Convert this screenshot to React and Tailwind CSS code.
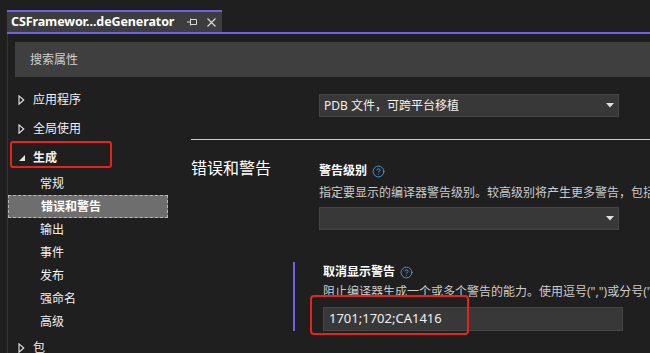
import React from 'react'
import { CircleHelp } from 'lucide-react'

function Caret({ open }) {
    if (open) {
        return (
            <svg width="6" height="6" viewBox="0 0 6 6" className="shrink-0">
                <path d="M6 0 L6 6 L0 6 Z" fill="#e8e8e8" />
            </svg>
        )
    }
    return (
        <svg width="7" height="10" viewBox="0 0 7 10" className="shrink-0">
            <path d="M1 0.8 L5.8 5 L1 9.2 Z" fill="none" stroke="#e8e8e8" strokeWidth="1.1" />
        </svg>
    )
}

function DropArrow() {
    return (
        <svg width="8" height="5" viewBox="0 0 8 5">
            <path d="M0 0 L8 0 L4 4.5 Z" fill="#e0e0e0" />
        </svg>
    )
}

function Help() {
    return <CircleHelp size={13} strokeWidth={1.6} className="text-[#4aa3f0] ml-[5px]" />
}

function TopItem({ label, open, boxed }) {
    return (
        <div className="relative h-[29px] flex items-center pl-[10px] gap-[8px] text-[12px] text-[#f2f2f2]">
            <span className="w-[7px] flex justify-center"><Caret open={open} /></span>
            <span className={open ? 'font-bold' : ''}>{label}</span>
            {boxed && <div className="absolute left-[2px] top-[-2px] w-[102px] h-[27px] border-2 border-[#e8231b] rounded-[3px]" />}
        </div>
    )
}

function SubItem({ label, selected }) {
    return (
        <div className={'h-[23px] flex items-center pl-[32px] text-[12px] ' + (selected ? 'bg-[#6e6e6e] border border-dashed border-[#b8b8b8] font-bold text-white' : 'text-[#f2f2f2]')}>
            {label}
        </div>
    )
}

export default function App() {
    const subs = ['常规', '错误和警告', '输出', '事件', '发布', '强命名', '高级']
    return (
        <div className="w-[650px] h-[353px] bg-[#1f1f1f] overflow-hidden font-['Noto_Sans','Noto_Sans_CJK_SC',sans-serif] text-[12px]">
            {/* tab strip */}
            <div className="pt-[10px] pl-[7px]">
                <div className="w-[215px] h-[22px] bg-[#3d3d3d] border-t-2 border-[#7160e8] flex items-center pl-[4px] pr-[6px]">
                    <span className="font-bold text-white text-[12.5px] tracking-[-0.1px]">CSFramewor...deGenerator</span>
                    <svg width="10" height="8" viewBox="0 0 10 8" className="ml-auto mr-[10px]">
                        <path d="M0 4 H3 M3.5 0.5 V7.5 M3.5 1.5 H9.5 V6.5 H3.5" fill="none" stroke="#d8d8d8" strokeWidth="1" />
                    </svg>
                    <svg width="9" height="9" viewBox="0 0 9 9">
                        <path d="M0.5 0.5 L8.5 8.5 M8.5 0.5 L0.5 8.5" stroke="#d8d8d8" strokeWidth="1.2" />
                    </svg>
                </div>
                <div className="h-[2px] bg-[#7160e8]" />
            </div>

            {/* body */}
            <div className="ml-[7px] border-l border-[#353535] h-[320px]">
                <div className="pt-[8px] pl-[7px]">
                    <div className="h-[35px] bg-[#3f3f3f] flex items-center pl-[15px] text-[12px] text-[#cfcfcf]">搜索属性</div>
                </div>
                <div className="flex">
                    {/* tree */}
                    <div className="w-[160px] shrink-0 pt-[8px]">
                        <TopItem label="应用程序" />
                        <TopItem label="全局使用" />
                        <TopItem label="生成" open boxed />
                        {subs.map((s) => (
                            <SubItem key={s} label={s} selected={s === '错误和警告'} />
                        ))}
                        <TopItem label="包" />
                    </div>

                    {/* settings */}
                    <div className="flex-1 pl-[23px]">
                        <div className="pl-[128px] pt-[17px]">
                            <div className="w-[300px] h-[23px] bg-[#383838] border border-[#464646] flex items-center pl-[4px] pr-[4px] text-[12px] text-[#f0f0f0]">
                                <span>PDB 文件，可跨平台移植</span>
                                <span className="ml-auto"><DropArrow /></span>
                            </div>
                        </div>
                        <div className="mt-[22px] h-[1px] bg-[#c8c8c8]" />
                        <div className="flex pt-[17px]">
                            <div className="w-[128px] shrink-0 text-[16px] text-white leading-[22px]">错误和警告</div>
                            <div className="flex-1">
                                <div className="flex items-center h-[18px] mt-[5px] font-bold text-white">警告级别<Help /></div>
                                <div className="h-[18px] mt-[4px] flex items-center text-[#cccccc] whitespace-nowrap">指定要显示的编译器警告级别。较高级别将产生更多警告，包括</div>
                                <div className="mt-[5px] w-[300px] h-[23px] bg-[#383838] border border-[#464646] flex items-center justify-end pr-[4px]">
                                    <DropArrow />
                                </div>
                            </div>
                        </div>
                        <div className="flex mt-[32px] ml-[102px]">
                            <div className="w-[2px] h-[69px] bg-[#7160e8] shrink-0" />
                            <div className="pl-[28px] relative">
                                <div className="flex items-center h-[18px] mt-[1px] font-bold text-white">取消显示警告<Help /></div>
                                <div className="h-[18px] mt-[2px] flex items-center text-[#cccccc] whitespace-nowrap">阻止编译器生成一个或多个警告的能力。使用逗号(",")或分号(";")</div>
                                <div className="mt-[6px] w-[300px] h-[24px] bg-[#383838] border border-[#464646] flex items-center pl-[5px] text-[13px] text-[#f0f0f0]">1701;1702;CA1416</div>
                                <div className="absolute left-[15px] top-[33px] w-[159px] h-[40px] border-2 border-[#e8231b] rounded-[4px]" />
                            </div>
                        </div>
                    </div>
                </div>
            </div>
        </div>
    )
}
